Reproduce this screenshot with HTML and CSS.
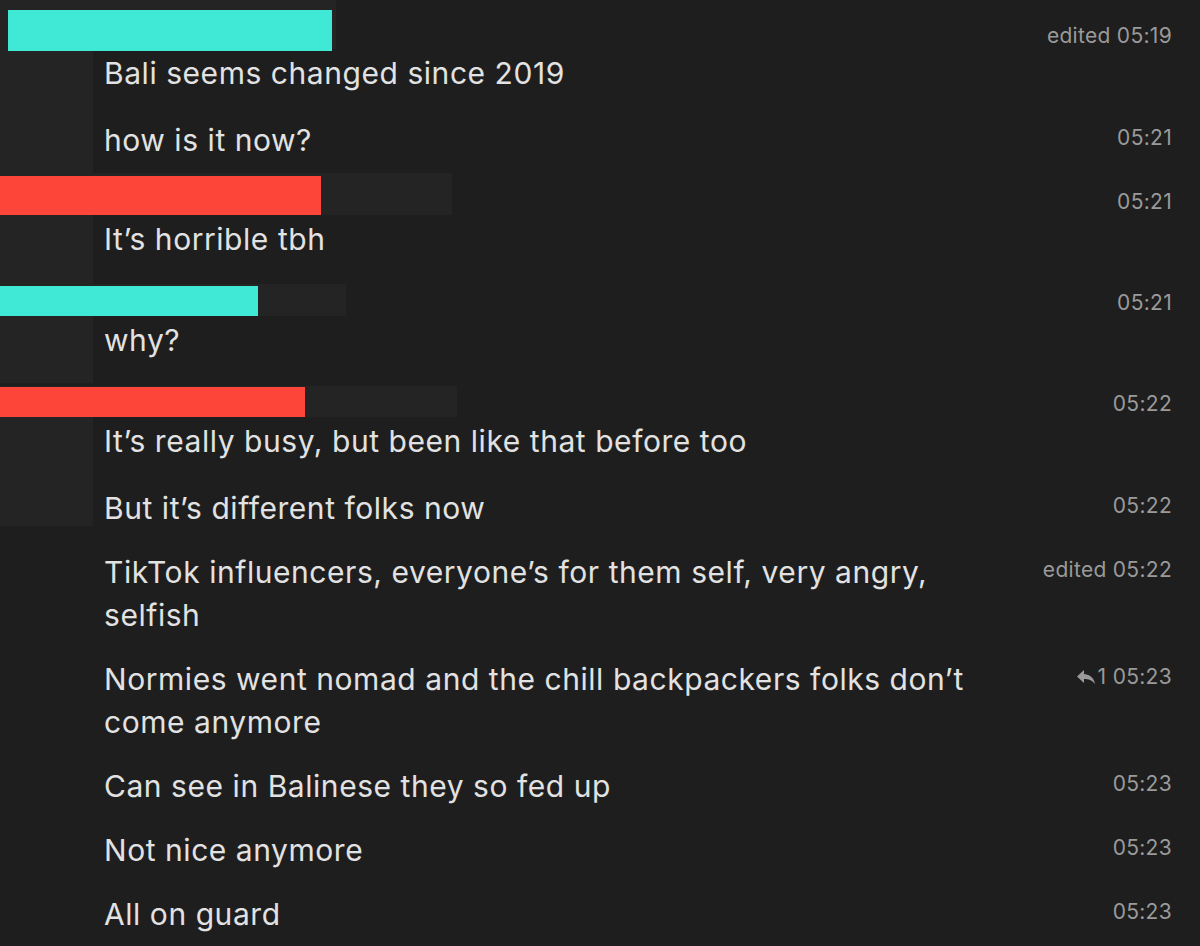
FILE: index.html
```html
<!DOCTYPE html>
<html lang="en">
<head>
    <meta charset="UTF-8">
    <title>Chat</title>
    <link rel="stylesheet" href="styles.css">
</head>
<body>

    <div class="chat">

        <!-- Grupo 1 -->
        <div class="header header-1">
            <div class="name-box box-1"><div class="name-bar cyan bar-1"></div></div>
            <span class="time">edited 05:19</span>
        </div>
        <div class="group">
            <div class="avatar avatar-1"></div>
            <div class="messages">
                <div class="msg first"><p class="text">Bali seems changed since 2019</p></div>
                <div class="msg"><p class="text">how is it now?</p><span class="time">05:21</span></div>
            </div>
        </div>

        <!-- Grupo 2 -->
        <div class="header header-2">
            <div class="name-box box-2"><div class="name-bar red bar-2"></div></div>
            <span class="time">05:21</span>
        </div>
        <div class="group">
            <div class="avatar avatar-2"></div>
            <div class="messages">
                <div class="msg first"><p class="text">It’s horrible tbh</p></div>
            </div>
        </div>

        <!-- Grupo 3 -->
        <div class="header header-3">
            <div class="name-box box-3"><div class="name-bar cyan bar-3"></div></div>
            <span class="time">05:21</span>
        </div>
        <div class="group">
            <div class="avatar avatar-3"></div>
            <div class="messages">
                <div class="msg first"><p class="text">why?</p></div>
            </div>
        </div>

        <!-- Grupo 4 -->
        <div class="header header-4">
            <div class="name-box box-4"><div class="name-bar red bar-4"></div></div>
            <span class="time">05:22</span>
        </div>
        <div class="group">
            <div class="avatar avatar-4"></div>
            <div class="messages">
                <div class="msg first"><p class="text">It’s really busy, but been like that before too</p></div>
                <div class="msg"><p class="text">But it’s different folks now</p><span class="time">05:22</span></div>
                <div class="msg"><p class="text">TikTok influencers, everyone’s for them self, very angry, selfish</p><span class="time">edited 05:22</span></div>
                <div class="msg">
                    <p class="text">Normies went nomad and the chill backpackers folks don’t come anymore</p>
                    <span class="time">
                        <svg class="reply" viewBox="0 0 20 16" width="20" height="16"><path d="M8 1 L1 7.5 L8 14 V10 C12.5 10 16 11.2 19 15 C18.2 9.5 14.5 5.6 8 5 Z" fill="currentColor"/></svg>1 05:23
                    </span>
                </div>
                <div class="msg"><p class="text">Can see in Balinese they so fed up</p><span class="time">05:23</span></div>
                <div class="msg"><p class="text">Not nice anymore</p><span class="time">05:23</span></div>
                <div class="msg"><p class="text">All on guard</p><span class="time">05:23</span></div>
            </div>
        </div>

    </div>

</body>
</html>
```

FILE: styles.css
```css
body {
    margin: 0;
    background-color: #1e1e1e;
    font-family: "Inter", "Roboto", sans-serif;
    color: #e2e2e2;
    overflow: hidden;
}

.chat {
    width: 1200px;
}

/* Cabeçalho de cada grupo (nome + hora) */
.header {
    display: flex;
    align-items: flex-end;
    padding-right: 28px;
}

.header .time {
    margin-left: auto;
    margin-bottom: 1px;
}

.name-box {
    height: 100%;
    background-color: #242424;
    align-self: stretch;
}

.name-bar {
    height: 30px;
}

.cyan {
    background-color: #40e9d5;
}

.red {
    background-color: #fe4539;
}

.header-1 { height: 49px; }
.header-2 { height: 42px; }
.header-3 { height: 32px; }
.header-4 { height: 31px; margin-top: 3px; }

.box-1 { width: 336px; }
.box-2 { width: 452px; }
.box-3 { width: 346px; }
.box-4 { width: 457px; }

.bar-1 { width: 324px; height: 41px; margin: 10px 0 0 8px; position: relative; }
.bar-2 { width: 321px; height: 39px; margin-top: 3px; }
.bar-3 { width: 258px; height: 30px; margin-top: 2px; }
.bar-4 { width: 305px; height: 30px; margin-top: 1px; }

/* Corpo do grupo */
.group {
    display: flex;
    align-items: flex-start;
}

.avatar {
    width: 93px;
    flex-shrink: 0;
    background-color: #242424;
}

.avatar-1 { height: 124px; }
.avatar-2 { height: 69px; }
.avatar-3 { height: 67px; }
.avatar-4 { height: 109px; }

.messages {
    flex: 1;
    margin-left: -93px;
}

.msg {
    display: flex;
    align-items: flex-start;
    padding: 10px 28px 11px 104px;
}

.msg.first {
    padding-top: 3px;
    padding-bottom: 14px;
}

.msg .time {
    margin-top: 7px;
}

.text {
    flex: 1;
    margin: 0;
    max-width: 880px;
    font-size: 30px;
    line-height: 43px;
    letter-spacing: 0.55px;
}

.time {
    margin-left: auto;
    font-size: 21px;
    line-height: 24px;
    letter-spacing: 0.3px;
    color: #9a9a9a;
    white-space: nowrap;
    display: flex;
    align-items: center;
}

.reply {
    flex-shrink: 0;
    margin-right: 2px;
}
```
